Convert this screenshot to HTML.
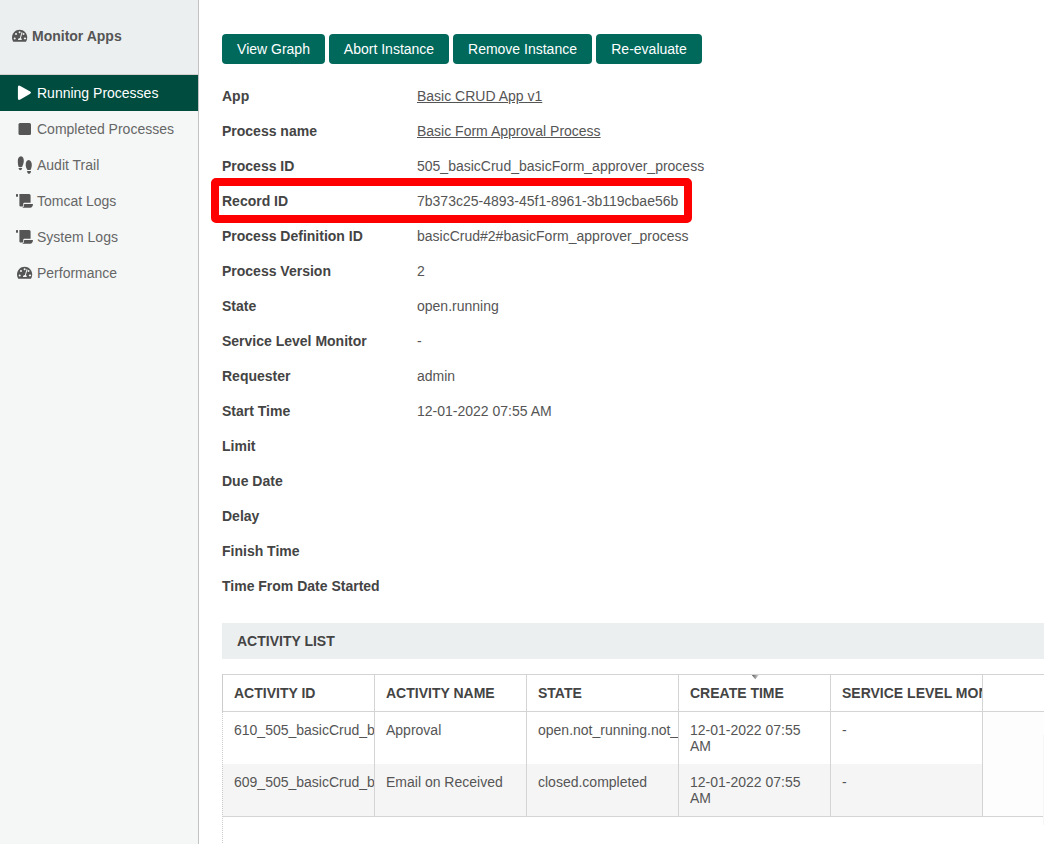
<!DOCTYPE html>
<html><head><meta charset="utf-8">
<style>
*{box-sizing:border-box;margin:0;padding:0}
html,body{width:1044px;height:844px;overflow:hidden;background:#fff;font-family:"Liberation Sans",sans-serif;font-size:14px;color:#333}
#side{position:absolute;left:0;top:0;width:199px;height:844px;background:#f5f7f7;border-right:1px solid #c2c2c2}
#side .hd{position:absolute;left:0;top:0;width:198px;height:75px;background:#eceff0;border-bottom:1px solid #d6cfcf}
#side .hd span{position:absolute;left:32px;top:27px;font-weight:bold;color:#555;line-height:18px}
#side .hd svg{position:absolute;left:12px;top:29px}
.nav{position:absolute;left:0;width:198px;height:36px;color:#666}
.nav span{position:absolute;left:37px;top:9px;line-height:18px}
.nav svg{position:absolute}
.nav.act{background:#004d40;color:#fff}
#main{position:absolute;left:199px;top:0;width:845px;height:844px}
.btn{position:absolute;top:34px;height:30px;background:#00695c;color:#fff;border-radius:4px;line-height:30px;text-align:center}
.lbl{position:absolute;left:222px;font-weight:bold;color:#444;line-height:20px}
.val{position:absolute;left:417px;color:#555;line-height:20px}
.val u{text-decoration:underline}
#redbox{position:absolute;left:211px;top:178px;width:481px;height:45px;border:8px solid #f00;border-radius:5px}
#al{position:absolute;left:222px;top:623px;width:822px;height:36px;background:#eceff0}
#al span{position:absolute;left:15px;top:9px;font-weight:bold;color:#444;line-height:18px}
#tbl{position:absolute;left:222px;top:674px;width:822px;height:170px;border-top:1px solid #d4d4d4}
#tbl .hc{position:absolute;top:0;height:37px;border-bottom:1px solid #d4d4d4;overflow:hidden}
#tbl .hc span{position:absolute;left:12px;top:9px;font-weight:bold;color:#444;line-height:18px;white-space:nowrap}
#tbl .bc{position:absolute;height:52px;overflow:hidden}
#tbl .bc span{position:absolute;left:12px;top:10px;right:12px;color:#555;line-height:16px}
#tbl .sortarr{position:absolute;left:530px;top:1px;width:0;height:0;border-left:4px solid transparent;border-right:4px solid transparent;border-top:4px solid #999}
</style></head><body>
<div id="side">
  <div class="hd">
    <span>Monitor Apps</span>
  </div>
  <div class="nav act" style="top:75px">
    <span>Running Processes</span>
  </div>
  <div class="nav" style="top:111px">
    <span>Completed Processes</span>
  </div>
  <div class="nav" style="top:147px"><span>Audit Trail</span></div>
  <div class="nav" style="top:183px"><span>Tomcat Logs</span></div>
  <div class="nav" style="top:219px"><span>System Logs</span></div>
  <div class="nav" style="top:255px"><span>Performance</span></div>
<svg style="position:absolute;left:0;top:0" width="198" height="300" viewBox="0 0 198 300">
<g transform="translate(12,29.7)"><path d="M1.2 12.1C0.4 10.8 0 9.3 0 7.7C0 3.5 3.4 0 7.6 0C11.8 0 15.2 3.5 15.2 7.7C15.2 9.3 14.8 10.8 14 12.1Z" fill="#555"/><g fill="#eceff0"><circle cx="7.6" cy="2.5" r="1"/><circle cx="4" cy="4.3" r="1"/><circle cx="11.5" cy="4.3" r="1"/><circle cx="2.7" cy="8.7" r="1"/><ellipse cx="13" cy="8.7" rx="1.2" ry="0.9"/><path d="M9.6 2.4L10.5 2.7L8.9 8.4C9.5 8.7 9.8 9.4 9.8 10.2L5.95 10.2C5.95 9.2 6.8 8.4 7.9 8.3Z"/></g></g>
<path d="M20.3 85.9L30.2 91.6Q31.9 92.7 30.2 93.8L20.3 99.5Q17.9 100.9 17.9 98.2L17.9 87.2Q17.9 84.5 20.3 85.9Z" fill="#fff"/>
<rect x="18.5" y="123" width="12.5" height="12" rx="1.5" fill="#555"/>
<g fill="#555"><path d="M21 156.3C23 156.3 23.9 158.6 23.8 161C23.7 163.5 22.8 165.3 22.2 166.8C21.6 167.3 19.4 167.3 18.5 166.8C18 165.2 17.8 163.3 17.8 161C17.8 158.5 18.8 156.3 21 156.3Z"/><path d="M18.6 168.1L22.1 168.1C22.1 169.4 21.3 170.2 20.35 170.2C19.4 170.2 18.6 169.4 18.6 168.1Z"/><path d="M28.6 160.1C30.6 160.1 31.8 162.4 31.8 164.8C31.8 167 31.2 168.4 30.7 169.7C30 170.1 27.8 170.1 27.2 169.7C26.4 168.2 25.7 166.8 25.7 164.8C25.7 162.4 26.6 160.1 28.6 160.1Z"/><path d="M27.1 171.1L31 171.1C31 172.9 30.1 173.9 29 173.9C27.9 173.9 27.1 172.9 27.1 171.1Z"/></g>
<g transform="translate(0,0)" fill="#555"><rect x="16" y="194" width="2" height="2.7" rx="0.5"/><path d="M19.4 194L29.1 194Q30.6 194 30.6 195.5L30.6 202.7L24.1 202.7C23.6 202.7 23.3 203.1 23.3 203.8L23.3 205.2C23.3 206 22.8 206.6 22 206.6L20.8 206.6C20 206.6 19.4 205.9 19.4 205Z"/><path d="M24.6 204L32.3 204C32.9 204 33.1 204.5 32.9 205.1C32.6 206.6 31.8 207.7 30.4 207.7L22.2 207.7C23.4 207.4 24 206.6 24 205.6L24 204.6C24 204.2 24.2 204 24.6 204Z"/></g>
<g transform="translate(0,36)" fill="#555"><rect x="16" y="194" width="2" height="2.7" rx="0.5"/><path d="M19.4 194L29.1 194Q30.6 194 30.6 195.5L30.6 202.7L24.1 202.7C23.6 202.7 23.3 203.1 23.3 203.8L23.3 205.2C23.3 206 22.8 206.6 22 206.6L20.8 206.6C20 206.6 19.4 205.9 19.4 205Z"/><path d="M24.6 204L32.3 204C32.9 204 33.1 204.5 32.9 205.1C32.6 206.6 31.8 207.7 30.4 207.7L22.2 207.7C23.4 207.4 24 206.6 24 205.6L24 204.6C24 204.2 24.2 204 24.6 204Z"/></g>
<g transform="translate(17,266.7)"><path d="M1.2 12.1C0.4 10.8 0 9.3 0 7.7C0 3.5 3.4 0 7.6 0C11.8 0 15.2 3.5 15.2 7.7C15.2 9.3 14.8 10.8 14 12.1Z" fill="#555"/><g fill="#f5f7f7"><circle cx="7.6" cy="2.5" r="1"/><circle cx="4" cy="4.3" r="1"/><circle cx="11.5" cy="4.3" r="1"/><circle cx="2.7" cy="8.7" r="1"/><ellipse cx="13" cy="8.7" rx="1.2" ry="0.9"/><path d="M9.6 2.4L10.5 2.7L8.9 8.4C9.5 8.7 9.8 9.4 9.8 10.2L5.95 10.2C5.95 9.2 6.8 8.4 7.9 8.3Z"/></g></g>
</svg>
</div>

<div class="btn" style="left:222px;width:103px">View Graph</div>
<div class="btn" style="left:329px;width:120px">Abort Instance</div>
<div class="btn" style="left:453px;width:139px">Remove Instance</div>
<div class="btn" style="left:596px;width:106px">Re-evaluate</div>

<div class="lbl" style="top:86px">App</div><div class="val" style="top:86px"><u>Basic CRUD App v1</u></div>
<div class="lbl" style="top:121px">Process name</div><div class="val" style="top:121px"><u>Basic Form Approval Process</u></div>
<div class="lbl" style="top:156px">Process ID</div><div class="val" style="top:156px">505_basicCrud_basicForm_approver_process</div>
<div class="lbl" style="top:191px">Record ID</div><div class="val" style="top:191px">7b373c25-4893-45f1-8961-3b119cbae56b</div>
<div class="lbl" style="top:226px">Process Definition ID</div><div class="val" style="top:226px">basicCrud#2#basicForm_approver_process</div>
<div class="lbl" style="top:261px">Process Version</div><div class="val" style="top:261px">2</div>
<div class="lbl" style="top:296px">State</div><div class="val" style="top:296px">open.running</div>
<div class="lbl" style="top:331px">Service Level Monitor</div><div class="val" style="top:331px">-</div>
<div class="lbl" style="top:366px">Requester</div><div class="val" style="top:366px">admin</div>
<div class="lbl" style="top:401px">Start Time</div><div class="val" style="top:401px">12-01-2022 07:55 AM</div>
<div class="lbl" style="top:436px">Limit</div>
<div class="lbl" style="top:471px">Due Date</div>
<div class="lbl" style="top:506px">Delay</div>
<div class="lbl" style="top:541px">Finish Time</div>
<div class="lbl" style="top:576px">Time From Date Started</div>
<div id="redbox"></div>

<div id="al"><span>ACTIVITY LIST</span></div>
<div id="tbl">
<div class="hc" style="left:0px;width:152px;"><span>ACTIVITY ID</span></div>
<div class="hc" style="left:152px;width:152px;"><span>ACTIVITY NAME</span></div>
<div class="hc" style="left:304px;width:152px;"><span>STATE</span></div>
<div class="hc" style="left:456px;width:152px;"><span>CREATE TIME</span></div>
<div class="hc" style="left:608px;width:152px;"><span>SERVICE LEVEL MONITOR</span></div>
<div class="hc" style="left:760px;width:62px;"><span></span></div>
<div class="bc" style="left:0px;top:37px;width:152px;background:#fff;"><span>610_505_basicCrud_basicForm_approver_process_approve</span></div>
<div class="bc" style="left:152px;top:37px;width:152px;background:#fff;"><span>Approval</span></div>
<div class="bc" style="left:304px;top:37px;width:152px;background:#fff;"><span>open.not_running.not_started</span></div>
<div class="bc" style="left:456px;top:37px;width:152px;background:#fff;"><span>12-01-2022 07:55 AM</span></div>
<div class="bc" style="left:608px;top:37px;width:152px;background:#fff;"><span>-</span></div>
<div class="bc" style="left:760px;top:37px;width:62px;background:#fdfdfd;"><span></span></div>
<div class="bc" style="left:0px;top:89px;width:152px;background:#f5f5f5;"><span>609_505_basicCrud_basicForm_approver_process_email</span></div>
<div class="bc" style="left:152px;top:89px;width:152px;background:#f5f5f5;"><span>Email on Received</span></div>
<div class="bc" style="left:304px;top:89px;width:152px;background:#f5f5f5;"><span>closed.completed</span></div>
<div class="bc" style="left:456px;top:89px;width:152px;background:#f5f5f5;"><span>12-01-2022 07:55 AM</span></div>
<div class="bc" style="left:608px;top:89px;width:152px;background:#f5f5f5;"><span>-</span></div>
<div class="bc" style="left:760px;top:89px;width:62px;background:#fdfdfd;"><span></span></div>
<svg style="position:absolute;left:529px;top:0" width="9" height="6"><defs><linearGradient id="sg" x1="0" x2="1" y1="0" y2="0"><stop offset="0" stop-color="#555"/><stop offset="1" stop-color="#ddd"/></linearGradient></defs><path d="M0.8 0L7.8 0L4.3 4.2Z" fill="url(#sg)"/></svg><div style="position:absolute;left:152px;top:0;width:1px;height:142px;background:#d4d4d4"></div><div style="position:absolute;left:304px;top:0;width:1px;height:142px;background:#d4d4d4"></div><div style="position:absolute;left:456px;top:0;width:1px;height:142px;background:#d4d4d4"></div><div style="position:absolute;left:608px;top:0;width:1px;height:142px;background:#d4d4d4"></div><div style="position:absolute;left:760px;top:0;width:1px;height:142px;background:#d4d4d4"></div><div style="position:absolute;left:0;top:141px;width:822px;height:1px;background:#d4d4d4"></div><div style="position:absolute;left:0;top:0;width:1px;height:37px;background:#ccc"></div><div style="position:absolute;left:0;top:37px;width:0;height:133px;border-left:1px dotted #ccc"></div>
</div>
<div style="position:absolute;left:1043px;top:735px;width:1px;height:90px;background:#f6f6f6"></div>
</body></html>
